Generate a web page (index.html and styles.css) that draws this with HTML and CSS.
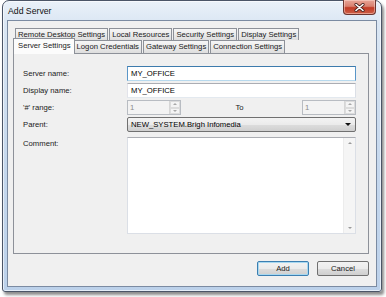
FILE: index.html
```html
<!DOCTYPE html>
<html>
<head>
    <title>Add Server</title>
    <link rel="stylesheet" href="styles.css">
</head>
<body>
    <div class="window">
        <!-- title bar -->
        <div class="titlebar">
            <span class="title">Add Server</span>
            <div class="close">
                <svg width="11" height="9" viewBox="0 0 11 9">
                    <path d="M2 1.5 L9 7.5 M9 1.5 L2 7.5" stroke="#4a2420" stroke-width="3.2" stroke-linecap="round"/>
                    <path d="M2 1.5 L9 7.5 M9 1.5 L2 7.5" stroke="#ffffff" stroke-width="1.6" stroke-linecap="round"/>
                </svg>
            </div>
        </div>

        <div class="client">
            <!-- tab strip, two rows -->
            <div class="tabs">
                <div class="tab-row back">
                    <div class="tab">Remote Desktop Settings</div>
                    <div class="tab">Local Resources</div>
                    <div class="tab">Security Settings</div>
                    <div class="tab">Display Settings</div>
                </div>
                <div class="tab-row front">
                    <div class="tab active">Server Settings</div>
                    <div class="tab">Logon Credentials</div>
                    <div class="tab">Gateway Settings</div>
                    <div class="tab">Connection Settings</div>
                </div>
            </div>

            <div class="panel">
                <div class="form">
                    <label class="lbl">Server name:</label>
                    <div class="field focus">MY_OFFICE</div>

                    <label class="lbl">Display name:</label>
                    <div class="field">MY_OFFICE</div>

                    <label class="lbl">'#' range:</label>
                    <div class="range">
                        <div class="spin">
                            <span class="spin-val">1</span>
                            <div class="spin-btns">
                                <div class="spin-btn"><span class="arr up"></span></div>
                                <div class="spin-btn"><span class="arr down"></span></div>
                            </div>
                        </div>
                        <span class="to">To</span>
                        <div class="spin">
                            <span class="spin-val">1</span>
                            <div class="spin-btns">
                                <div class="spin-btn"><span class="arr up"></span></div>
                                <div class="spin-btn"><span class="arr down"></span></div>
                            </div>
                        </div>
                    </div>

                    <label class="lbl">Parent:</label>
                    <div class="combo">
                        <span>NEW_SYSTEM.Brigh Infomedia</span>
                        <span class="combo-arrow"></span>
                    </div>

                    <label class="lbl top">Comment:</label>
                    <div class="memo">
                        <div class="memo-text"></div>
                        <div class="vscroll">
                            <span class="arr up"></span>
                            <span class="arr down"></span>
                        </div>
                    </div>
                </div>
            </div>

            <div class="buttons">
                <button class="btn default">Add</button>
                <button class="btn">Cancel</button>
            </div>
        </div>
    </div>
</body>
</html>
```

FILE: styles.css
```css
body {
    margin: 0;
    padding: 0;
    width: 386px;
    height: 297px;
    background-color: #ffffff;
    font-family: "Liberation Sans", Arial, sans-serif;
    font-size: 7.7px;
    color: #1a1a1a;
    overflow: hidden;
}

.window {
    margin-left: 2px;
    width: 380px;
    height: 292px;
    box-sizing: border-box;
    border: 1px solid #4b5567;
    border-radius: 7px 7px 3px 3px;
    padding: 0 4px 4px 4px;
    display: flex;
    flex-direction: column;
    background: linear-gradient(to bottom, #eaf1f9 0%, #dae6f3 8%, #c4d7ed 60%, #bcd1ea 100%);
    box-shadow: inset 0 0 0 1px rgba(255, 255, 255, 0.6), 2px 3px 3px rgba(0, 0, 0, 0.45);
}

.titlebar {
    height: 19px;
    padding: 0 1px;
    display: flex;
    align-items: flex-start;
}

.title {
    font-size: 8.7px;
    color: #111111;
    margin-top: 5px;
}

.close {
    margin-left: auto;
    margin-top: -1px;
    width: 33px;
    height: 15px;
    box-sizing: border-box;
    border: 1px solid #6b3530;
    border-top: none;
    border-radius: 0 0 4px 4px;
    background: linear-gradient(to bottom, #e8a597 0%, #d9806f 45%, #c23b26 55%, #cc5f47 100%);
    box-shadow: inset 0 0 0 1px rgba(255, 220, 210, 0.5);
    display: flex;
    justify-content: center;
    align-items: center;
}

.client {
    flex: 1;
    border: 1px solid #7b8ba2;
    background-color: #f0f0f0;
    padding-top: 7px;
}

/* tabs */
.tabs {
    margin-left: 7px;
    display: flex;
    flex-direction: column;
}

.tab-row {
    display: flex;
}

.tab {
    box-sizing: border-box;
    padding: 0 2px;
    border: 1px solid #8d9199;
    border-bottom: none;
    background: linear-gradient(to bottom, #f6f6f6 0%, #ebebeb 50%, #dedede 100%);
    white-space: nowrap;
    line-height: 11px;
    color: #1a1a1a;
}

.back .tab {
    height: 12px;
    margin-right: 1px;
}

.front .tab {
    height: 13px;
    margin-right: 1px;
    line-height: 12px;
}

.tab.active {
    position: relative;
    z-index: 1;
    height: 16px;
    margin: -2px -1px -1px -2px;
    padding: 0 3px 0 4px;
    background: #fcfcfc;
    line-height: 14px;
}

.panel {
    margin-left: 5px;
    width: 356px;
    height: 201px;
    box-sizing: border-box;
    border: 1px solid #8d9199;
    background-color: #f0f0f0;
    padding: 12px 12px 0 9px;
}

.form {
    display: grid;
    grid-template-columns: 104px 1fr;
    row-gap: 2px;
}

.lbl {
    line-height: 15px;
    color: #1a1a1a;
}

.lbl.top {
    line-height: 11px;
    margin-top: 4px;
}

.field {
    height: 15px;
    box-sizing: border-box;
    border: 1px solid #abadb3;
    border-left-color: #e2e3ea;
    border-right-color: #dbdfe6;
    border-bottom-color: #e3e9ef;
    background-color: #ffffff;
    padding-left: 3px;
    line-height: 13px;
    color: #000000;
}

.field.focus {
    border-color: #5a96c8;
    border-top-color: #3d7bad;
    border-bottom-color: #b7d9ed;
}

.range {
    display: flex;
    justify-content: space-between;
    align-items: center;
}

.spin {
    width: 54px;
    height: 15px;
    box-sizing: border-box;
    border: 1px solid #b8bcc2;
    background-color: #f3f3f3;
    display: flex;
}

.spin-val {
    flex: 1;
    padding-left: 2px;
    line-height: 13px;
    color: #8a8a8a;
}

.spin-btns {
    width: 10px;
    display: flex;
    flex-direction: column;
    border-left: 1px solid #d6d6d6;
}

.spin-btn {
    flex: 1;
    display: flex;
    justify-content: center;
    align-items: center;
    border: 1px solid #dcdcdc;
    background: #f4f4f4;
}

.arr {
    width: 0;
    height: 0;
    border-left: 2px solid transparent;
    border-right: 2px solid transparent;
}

.arr.up {
    border-bottom: 2px solid #a8a8a8;
}

.arr.down {
    border-top: 2px solid #a8a8a8;
}

.to {
    margin-right: 4px;
    line-height: 15px;
}

.combo {
    height: 15px;
    box-sizing: border-box;
    border: 1px solid #707070;
    border-radius: 2px;
    background: linear-gradient(to bottom, #f3f3f3 0%, #ebebeb 50%, #dddddd 51%, #cfcfcf 100%);
    padding: 0 4px 0 3px;
    display: flex;
    align-items: center;
    justify-content: space-between;
    color: #000000;
}

.combo-arrow {
    width: 0;
    height: 0;
    border-left: 3px solid transparent;
    border-right: 3px solid transparent;
    border-top: 3px solid #111111;
}

.memo {
    margin-top: 3px;
    height: 97px;
    box-sizing: border-box;
    border: 1px solid #dbdfe6;
    border-top-color: #abadb3;
    background-color: #ffffff;
    display: flex;
}

.memo-text {
    flex: 1;
}

.vscroll {
    width: 11px;
    background: #f5f5f5;
    border-left: 1px solid #ececec;
    display: flex;
    flex-direction: column;
    justify-content: space-between;
    align-items: center;
    padding: 4px 0 4px;
}

.vscroll .arr.up {
    border-bottom-color: #9a9a9a;
}

.vscroll .arr.down {
    border-top-color: #9a9a9a;
}

.buttons {
    margin: 7px 0 0 5px;
    width: 356px;
    display: flex;
    justify-content: flex-end;
    gap: 8px;
}

.btn {
    width: 52px;
    height: 15px;
    padding: 0;
    box-sizing: border-box;
    border: 1px solid #707070;
    border-radius: 2px;
    background: linear-gradient(to bottom, #f2f2f2 0%, #ebebeb 50%, #dddddd 51%, #cfcfcf 100%);
    font-family: "Liberation Sans", Arial, sans-serif;
    font-size: 7.7px;
    color: #1a1a1a;
}

.btn.default {
    border-color: #3c7fb1;
    box-shadow: inset 0 0 0 1px #a8d8f0;
}
```
